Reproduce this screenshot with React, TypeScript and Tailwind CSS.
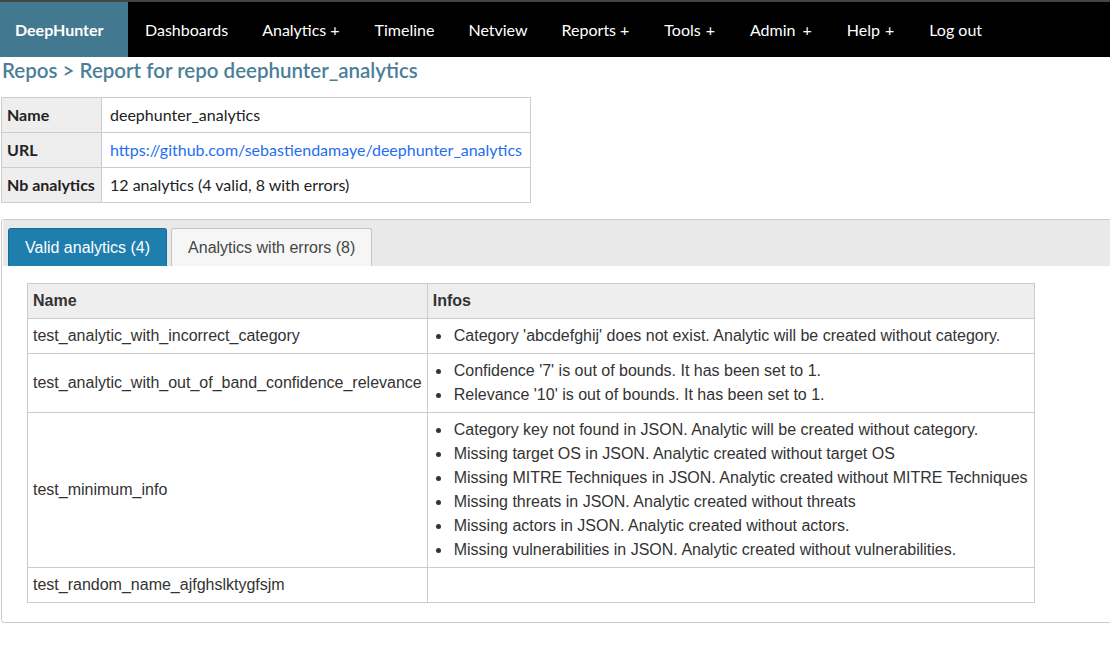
const navItems = [
  { label: "Dashboards", plus: "" },
  { label: "Analytics", plus: "ml-[4px]" },
  { label: "Timeline", plus: "" },
  { label: "Netview", plus: "" },
  { label: "Reports", plus: "ml-[4px]" },
  { label: "Tools", plus: "ml-[5px]" },
  { label: "Admin", plus: "ml-[7px]" },
  { label: "Help", plus: "ml-[5px]" },
  { label: "Log out", plus: "" },
]

const repoInfo = [
  { label: "Name", value: "deephunter_analytics" },
  { label: "URL", value: "https://github.com/sebastiendamaye/deephunter_analytics", link: true },
  { label: "Nb analytics", value: "12 analytics (4 valid, 8 with errors)" },
]

const analytics = [
  {
    name: "test_analytic_with_incorrect_category",
    infos: ["Category 'abcdefghij' does not exist. Analytic will be created without category."],
  },
  {
    name: "test_analytic_with_out_of_band_confidence_relevance",
    infos: ["Confidence '7' is out of bounds. It has been set to 1.", "Relevance '10' is out of bounds. It has been set to 1."],
  },
  {
    name: "test_minimum_info",
    infos: [
      "Category key not found in JSON. Analytic will be created without category.",
      "Missing target OS in JSON. Analytic created without target OS",
      "Missing MITRE Techniques in JSON. Analytic created without MITRE Techniques",
      "Missing threats in JSON. Analytic created without threats",
      "Missing actors in JSON. Analytic created without actors.",
      "Missing vulnerabilities in JSON. Analytic created without vulnerabilities.",
    ],
  },
  { name: "test_random_name_ajfghslktygfsjm", infos: [] },
]

export default function App() {
  return (
    <div className="min-h-[647px] bg-white overflow-hidden font-['Lato',sans-serif]">
      {/* top nav */}
      <nav className="flex h-[57px] bg-black border-t-2 border-[#444]">
        <div className="flex items-center px-[15px] w-[128px] bg-[#437891] text-white font-bold text-[16px]">DeepHunter</div>
        <ul className="flex items-center">
          {navItems.map((item) => (
            <li key={item.label} className="px-[17px] text-white text-[16px] whitespace-nowrap">
              {item.label}
              {item.plus && <span className={`${item.plus} mr-[1px]`}>+</span>}
            </li>
          ))}
        </ul>
      </nav>

      <h1 className="px-[2px] h-[27px] leading-[26px] text-[20.5px] font-semibold text-[#4a7f99]">
        Repos &gt; Report for repo deephunter_analytics
      </h1>

      <table className="mt-[13px] ml-[1px] border-collapse text-[16px] text-[#222]">
        <tbody>
          {repoInfo.map((row) => (
            <tr key={row.label} className="h-[35px]">
              <th className="border border-[#ccc] bg-[#eee] px-[5px] text-left font-bold w-[100px] whitespace-nowrap">{row.label}</th>
              <td className="border border-[#ccc] px-[8px] whitespace-nowrap">
                {row.link ? <span className="text-[#1f6ef0]">{row.value}</span> : row.value}
              </td>
            </tr>
          ))}
        </tbody>
      </table>

      {/* tabs */}
      <div className="mt-[16px] ml-[1px] mr-[-6px] border border-[#ccc] rounded-[3px] px-[1px] pb-[19px] font-['Liberation_Sans',Arial,sans-serif] text-[16px]">
        <div className="flex items-end gap-[4px] h-[46px] bg-[#e9e9e9] pl-[5px] rounded-t-[3px]">
          <div className="h-[38px] flex items-center px-[16px] bg-[#1e7eae] border border-[#1a6b94] border-b-0 rounded-t-[3px] text-white">
            Valid analytics (4)
          </div>
          <div className="h-[38px] flex items-center px-[16px] bg-[#f6f6f6] border border-[#c5c5c5] border-b-0 rounded-t-[3px] text-[#454545]">
            Analytics with errors (8)
          </div>
        </div>

        <table className="mt-[17px] ml-[24px] w-[1006px] border-collapse text-[#333]">
          <thead>
            <tr className="bg-[#eee]">
              <th className="w-[400px] border border-[#ccc] px-[5px] py-[5px] leading-6 text-left font-bold">Name</th>
              <th className="border border-[#ccc] px-[5px] py-[5px] leading-6 text-left font-bold">Infos</th>
            </tr>
          </thead>
          <tbody>
            {analytics.map((a) => (
              <tr key={a.name}>
                <td className="border border-[#ccc] px-[5px] py-[5px] leading-6 whitespace-nowrap">{a.name}</td>
                <td className="border border-[#ccc] px-[6px] py-[5px] leading-6">
                  {a.infos.length > 0 && (
                    <ul>
                      {a.infos.map((info) => (
                        <li key={info} className="flex items-center whitespace-nowrap">
                          <span className="w-[5px] h-[5px] ml-[2px] mr-[13px] rounded-full bg-[#333] shrink-0" />
                          {info}
                        </li>
                      ))}
                    </ul>
                  )}
                </td>
              </tr>
            ))}
          </tbody>
        </table>
      </div>
    </div>
  )
}
